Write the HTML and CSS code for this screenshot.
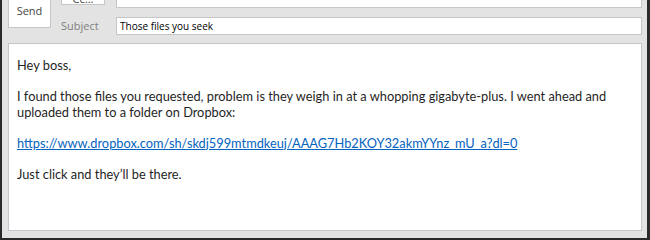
FILE: index.html
```html
<!DOCTYPE html>
<html lang="en">
<head>
  <meta charset="UTF-8">
  <meta name="viewport" content="width=device-width, initial-scale=1.0">
  <title>Message - Those files you seek</title>
  <link rel="stylesheet" href="styles.css">
</head>
<body>
  <div class="window">
    <!-- Kopf: Senden-Knopf und Adressfelder -->
    <div class="head">
      <button class="send">Send</button>
      <div class="fields">
        <div class="row row-to">
          <button class="cc">Cc...</button>
          <div class="input"></div>
        </div>
        <div class="row row-subject">
          <span class="label">Subject</span>
          <div class="input">Those files you seek</div>
        </div>
      </div>
    </div>

    <!-- Nachrichtentext -->
    <div class="message">
      <p>Hey boss,</p>
      <p>I found those files you requested, problem is they weigh in at a whopping gigabyte-plus. I went ahead and uploaded them to a folder on Dropbox:</p>
      <p><a href="#">https://www.dropbox.com/sh/skdj599mtmdkeuj/AAAG7Hb2KOY32akmYYnz_mU_a?dl=0</a></p>
      <p>Just click and they’ll be there.</p>
    </div>
  </div>
</body>
</html>
```

FILE: styles.css
```css
/* Grundlayout */
* { box-sizing: border-box; }
html, body {
  margin: 0;
  padding: 0;
  height: 100%;
  overflow: hidden;
}
body {
  background-color: #2b2b2b;
  font-family: 'Lato', 'Liberation Sans', sans-serif;
}
.window {
  height: 238px;
  margin: 0 3px 0 2px;
  padding: 0 5px 7px 6px;
  background-color: #e3e3e3;
  display: flex;
  flex-direction: column;
}
.head {
  display: flex;
  align-items: flex-start;
  margin-top: -22px;
}
.send {
  width: 43px;
  height: 50px;
  margin: 0;
  padding: 0 0 9px 0;
  background-color: #fff;
  border: 1px solid #c6c6c6;
  display: flex;
  flex-direction: column;
  justify-content: flex-end;
  align-items: center;
  font-family: 'Open Sans', sans-serif;
  font-size: 11px;
  color: #444;
}
.fields {
  flex: 1;
  margin-left: 10px;
  margin-top: 6px;
  display: flex;
  flex-direction: column;
  gap: 9px;
}
.row {
  display: flex;
  align-items: flex-start;
}
.cc {
  width: 44px;
  height: 21px;
  margin: 0 11px 0 0;
  padding: 0;
  background-color: #fff;
  border: 1px solid #c6c6c6;
  display: flex;
  align-items: flex-end;
  justify-content: center;
  font-family: 'Open Sans', sans-serif;
  font-size: 11px;
  line-height: 11px;
  color: #444;
}
.row-to .input {
  margin-top: 6px;
}
.label {
  width: 55px;
  font-family: 'Open Sans', sans-serif;
  font-size: 11px;
  line-height: 18px;
  color: #808080;
}
.input {
  flex: 1;
  height: 18px;
  padding: 0 3px;
  background-color: #fff;
  border: 1px solid #c6c6c6;
  font-family: 'Open Sans', sans-serif;
  font-size: 10px;
  line-height: 16px;
  color: #000;
}
.message {
  flex: 1;
  margin-top: 8px;
  padding: 14px 8px 0 8px;
  background-color: #fff;
  border: 1px solid #c4c7cb;
  font-size: 12.8px;
  line-height: 15.5px;
  color: #1f1f1f;
}
.message p {
  margin: 0 0 15.5px 0;
}
.message a {
  color: #0563c1;
  text-decoration: underline;
}
```
